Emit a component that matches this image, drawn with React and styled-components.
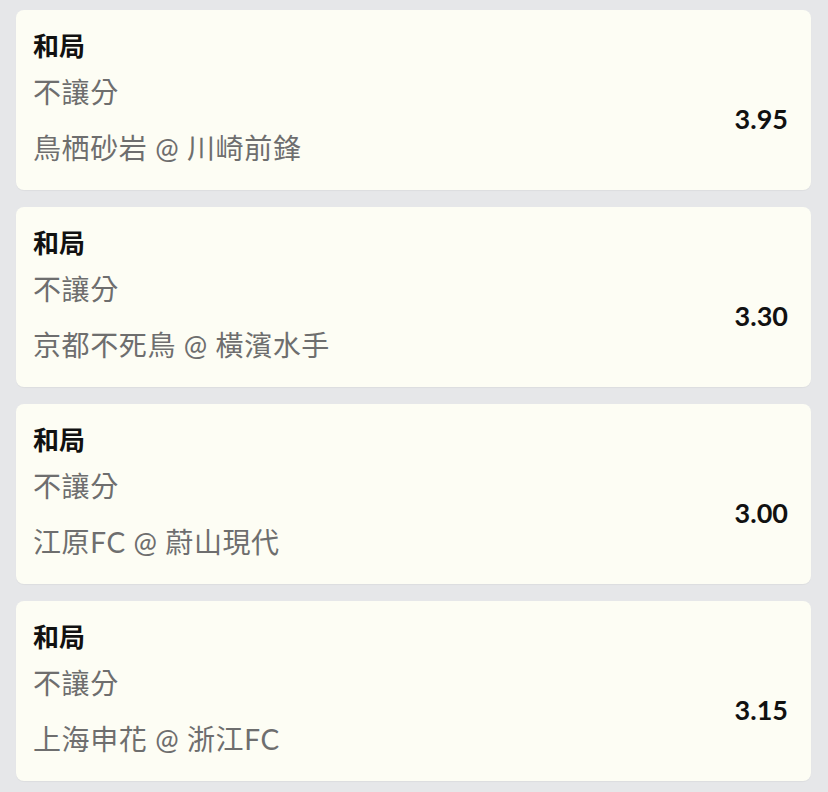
import React from 'react'
import styled, { createGlobalStyle } from 'styled-components'

const GlobalStyle = createGlobalStyle`
  html, body {
    margin: 0;
    padding: 0;
    background-color: #e6e7e9;
  }
  body {
    font-family: Lato, "Noto Sans CJK TC", sans-serif;
  }
`

const List = styled.div`
  display: flex;
  flex-direction: column;
  gap: 17px;
  padding: 10px 17px 12px 16px;
`

const Card = styled.section`
  background-color: #fdfdf4;
  border-radius: 8px;
  padding: 18px 23px 24px 17px;
  box-shadow: 0 1px 1px rgba(0, 0, 0, 0.04);
`

const Title = styled.h3`
  margin: 0;
  font-size: 26px;
  line-height: 36px;
  font-weight: bold;
  color: #111;
`

const Body = styled.div`
  display: flex;
  justify-content: space-between;
  align-items: center;
  margin-top: 10px;
`

const Info = styled.div`
  display: flex;
  flex-direction: column;
  gap: 20px;
`

const Line = styled.p`
  margin: 0;
  font-size: 28px;
  line-height: 36px;
  letter-spacing: 0.6px;
  color: #6e6e6e;
`

const Odds = styled.span`
  margin-bottom: 3px;
  font-size: 27px;
  font-weight: bold;
  color: #111;
`

const bets = [
  { market: '不讓分', match: '鳥栖砂岩 @ 川崎前鋒', odds: '3.95' },
  { market: '不讓分', match: '京都不死鳥 @ 橫濱水手', odds: '3.30' },
  { market: '不讓分', match: '江原FC @ 蔚山現代', odds: '3.00' },
  { market: '不讓分', match: '上海申花 @ 浙江FC', odds: '3.15' },
]

export default function App() {
  return (
    <>
      <GlobalStyle />
      <List>
        {bets.map((bet) => (
          <Card key={bet.match}>
            <Title>和局</Title>
            <Body>
              <Info>
                <Line>{bet.market}</Line>
                <Line>{bet.match}</Line>
              </Info>
              <Odds>{bet.odds}</Odds>
            </Body>
          </Card>
        ))}
      </List>
    </>
  )
}
